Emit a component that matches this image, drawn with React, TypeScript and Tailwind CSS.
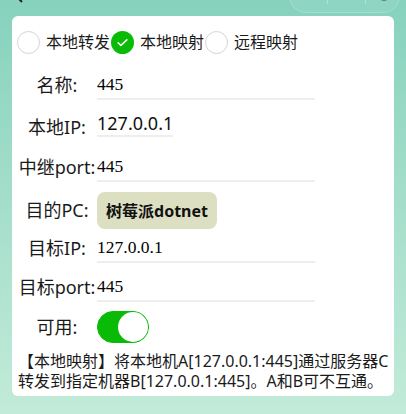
const sans = { fontFamily: '"Noto Sans", "Noto Sans CJK SC", sans-serif' }

type RadioProps = {
  label: string
  checked?: boolean
}

const Radio = ({ label, checked }: RadioProps) => (
  <div className="flex items-center">
    {checked ? (
      <div className="flex size-[23px] items-center justify-center rounded-full bg-[#09bb07]">
        <svg width="13" height="13" viewBox="0 0 24 24" fill="none">
          <path
            d="M4 12.5l5 5L20 7"
            stroke="white"
            strokeWidth="3"
            strokeLinecap="round"
            strokeLinejoin="round"
          />
        </svg>
      </div>
    ) : (
      <div className="size-[23px] rounded-full border border-[#d4d4d4] bg-white" />
    )}
    <span className="ml-[6px] mr-[1px] text-[16px] leading-[24px] text-[#1a1a1a]">
      {label}
    </span>
  </div>
)

const Label = ({ text }: { text: string }) => (
  <div className="w-[80px] shrink-0 whitespace-nowrap text-center text-[18px] text-[#1a1a1a]">
    {text}
  </div>
)

const SerifInput = ({ value }: { value: string }) => (
  <div
    className="h-[30px] w-[218px] border-b-2 border-[#eeeeee] text-[17.5px] leading-[28px] text-black"
    style={{ fontFamily: '"Liberation Serif", "Noto Sans CJK SC", serif' }}
  >
    {value}
  </div>
)

export default function App() {
  return (
    <div
      className="min-h-[414px] w-full bg-gradient-to-b from-[#86d2bd] to-[#c2ebd9]"
      style={sans}
    >
      <div className="relative h-[16px] overflow-hidden">
        <svg
          className="absolute left-[12px] top-[-12px]"
          width="14"
          height="16"
          viewBox="0 0 14 16"
          fill="none"
        >
          <path d="M10 2L4 8l6 6" stroke="#222" strokeWidth="2" />
        </svg>
        <div className="absolute left-[289px] top-[-20px] flex h-[33px] w-[111px] items-center rounded-full border border-[#a5ddcf] bg-[#8ed6c3]">
          <div className="ml-[37px] h-[14px] w-px bg-[#b0e2d6]" />
          <div className="ml-[37px] h-[14px] w-px bg-[#b0e2d6]" />
          <div className="ml-[14px] size-[8px] rounded-full bg-[#777]" />
        </div>
      </div>

      <div className="mx-[12px] rounded-[6px] bg-white pb-[5px] pl-[5px] pr-[6px] pt-[14px]">
        <div className="flex h-[24px] items-center">
          <Radio label="本地转发" />
          <Radio label="本地映射" checked />
          <Radio label="远程映射" />
        </div>

        <div className="mt-[16px] flex h-[30px] items-center">
          <Label text="名称:" />
          <SerifInput value="445" />
        </div>

        <div className="mt-[12px] flex h-[30px] items-center">
          <Label text="本地IP:" />
          <div className="h-[25px] self-start border-b-2 border-[#eeeeee] text-[18px] leading-[23px] text-[#111]">
            127.0.0.1
          </div>
        </div>

        <div className="mt-[10px] flex h-[30px] items-center">
          <Label text="中继port:" />
          <SerifInput value="445" />
        </div>

        <div className="mt-[10px] flex h-[37px] items-center">
          <Label text="目的PC:" />
          <button className="h-[37px] w-[120px] rounded-[8px] bg-[#dcdfc1] text-[16px] font-bold text-[#111]">
            树莓派dotnet
          </button>
        </div>

        <div className="mt-[4px] flex h-[30px] items-center">
          <Label text="目标IP:" />
          <SerifInput value="127.0.0.1" />
        </div>

        <div className="mt-[9px] flex h-[30px] items-center">
          <Label text="目标port:" />
          <SerifInput value="445" />
        </div>

        <div className="mt-[9px] flex h-[32px] items-center">
          <Label text="可用:" />
          <div className="flex h-[32px] w-[52px] items-center justify-end rounded-full border border-[#09bb07] bg-[#09bb07]">
            <div className="size-[30px] rounded-full bg-white" />
          </div>
        </div>

        <p className="mt-[8px] whitespace-nowrap pl-[1px] text-[16px] leading-[20px] text-[#1a1a1a]">
          【本地映射】将本地机A[127.0.0.1:445]通过服务器C
          <br />
          转发到指定机器B[127.0.0.1:445]。A和B可不互通。
        </p>
      </div>
    </div>
  )
}
